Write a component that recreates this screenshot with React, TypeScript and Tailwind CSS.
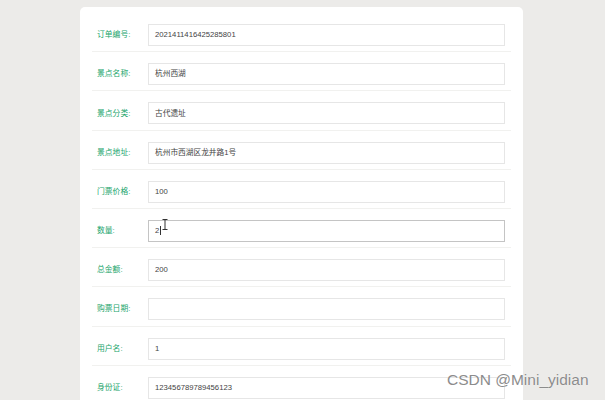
import React from "react";

const fields = [
  { label: "订单编号", value: "2021411416425285801" },
  { label: "景点名称", value: "杭州西湖" },
  { label: "景点分类", value: "古代遗址" },
  { label: "景点地址", value: "杭州市西湖区龙井路1号" },
  { label: "门票价格", value: "100" },
  { label: "数量", value: "2", focused: true },
  { label: "总金额", value: "200" },
  { label: "购票日期", value: "" },
  { label: "用户名", value: "1" },
  { label: "身份证", value: "123456789789456123" },
];

const FormRow = ({ label, value, focused }: { label: string; value: string; focused?: boolean }) => (
  <div className="flex h-[39.2px] shrink-0 items-start border-b border-[#f1f1ef] pt-[11px]">
    <div className="flex h-[22px] w-[56px] items-center pl-[5px] text-[7.8px] text-[#22a56c]">
      {label}:
    </div>
    <div
      className={
        "relative flex h-[22px] flex-1 items-center border pl-[6px] mr-[6px] text-[7.7px] text-[#444] " +
        (focused ? "border-[#c4c4c4]" : "border-[#e6e6e6]")
      }
    >
      {value}
      {focused && (
        <>
          <span className="ml-[0.5px] h-[9px] w-[1px] bg-[#333]" />
          {/* mouse I-beam */}
          <svg className="absolute left-[13px] top-[-2px]" width="6" height="11" viewBox="0 0 6 11">
            <path d="M0.5 0.5h5M3 0.5v10M0.5 10.5h5" stroke="#333" strokeWidth="1" fill="none" />
          </svg>
        </>
      )}
    </div>
  </div>
);

export default function App() {
  return (
    <div
      className="relative h-[400px] w-[605px] overflow-hidden bg-[#ecebe9]"
      style={{ fontFamily: '"Liberation Sans", "Noto Sans CJK SC", sans-serif' }}
    >
      <div className="ml-[80px] mt-[7px] h-[420px] w-[443px] rounded-t-[5px] bg-white px-[12px] pt-[6px]">
        <div className="flex flex-col">
          {fields.map((f) => (
            <FormRow key={f.label} label={f.label} value={f.value} focused={f.focused} />
          ))}
        </div>
      </div>
      {/* watermark */}
      <div
        className="absolute left-[447px] top-[368px] text-[15.5px] text-[#8c8c8c]"
        style={{ textShadow: "0 0 1px #fff" }}
      >
        CSDN @Mini_yidian
      </div>
    </div>
  );
}
